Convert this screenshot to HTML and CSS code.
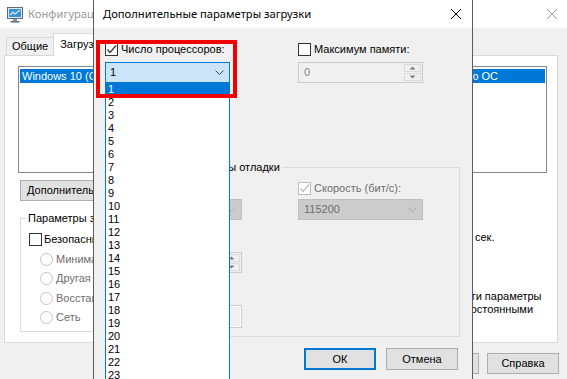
FILE: index.html
```html
<!DOCTYPE html>
<html lang="ru">

<head>
    <meta charset="UTF-8">
    <meta name="viewport" content="width=device-width, initial-scale=1.0">
    <title>Дополнительные параметры загрузки</title>
    <link rel="stylesheet" href="styles.css">
</head>

<body>
    <div class="desktop">

        <!-- окно "Конфигурация системы" (неактивное, позади) -->
        <div class="window back">
            <div class="titlebar">
                <svg class="app-icon" viewBox="0 0 18 18">
                    <rect x="1.5" y="2.5" width="15" height="11" fill="#dfe6ee" stroke="#5d6b7a" />
                    <rect x="3" y="4" width="12" height="8" fill="#3c8fd8" />
                    <path d="M4 10 L7 7 L9 9 L14 5" stroke="#cfe8ff" stroke-width="1.2" fill="none" />
                    <rect x="7" y="14" width="4" height="2" fill="#8a96a3" />
                    <rect x="4.5" y="16" width="9" height="1.5" fill="#5d6b7a" />
                </svg>
                <span class="title">Конфигурация системы</span>
                <svg class="close" viewBox="0 0 10 10">
                    <path d="M0 0 L10 10 M10 0 L0 10" stroke="#9a9a9a" stroke-width="1" />
                </svg>
            </div>

            <div class="tabs">
                <div class="tab">Общие</div>
                <div class="tab active">Загрузка</div>
            </div>

            <div class="tab-page">
                <div class="os-list">
                    <div class="os-item selected">
                        <span>Windows 10 (C:\Windows) : Текущая ОС;</span>
                        <span>Загружаемая по умолчанию ОС</span>
                    </div>
                </div>

                <div class="list-buttons">
                    <div class="btn">Дополнительные параметры...</div>
                </div>

                <div class="boot-area">
                    <div class="group boot-group">
                        <span class="group-title">Параметры загрузки</span>
                        <label class="check-row first">
                            <span class="box"></span>Безопасный режим
                        </label>
                        <label class="radio-row disabled"><span class="dot"></span>Минимальная</label>
                        <label class="radio-row disabled"><span class="dot"></span>Другая оболочка</label>
                        <label class="radio-row disabled"><span class="dot"></span>Восстановление</label>
                        <label class="radio-row disabled"><span class="dot"></span>Сеть</label>
                    </div>

                    <div class="boot-side">
                        <div class="timeout">
                            <span class="input"></span>
                            <span>сек.</span>
                        </div>
                        <label class="check-row persist">
                            <span class="box"></span>
                            <span class="persist-text">Сделать эти параметры загрузки постоянными</span>
                        </label>
                    </div>
                </div>
            </div>

            <div class="footer">
                <div class="btn wide"></div>
                <div class="btn wide"></div>
                <div class="btn wide"></div>
                <div class="btn wide">Справка</div>
            </div>
        </div>

        <!-- диалог "Дополнительные параметры загрузки" -->
        <div class="window front">
            <div class="titlebar">
                <span class="title">Дополнительные параметры загрузки</span>
                <svg class="close" viewBox="0 0 10 10">
                    <path d="M0 0 L10 10 M10 0 L0 10" stroke="#000" stroke-width="1" />
                </svg>
            </div>

            <div class="front-body">
                <div class="two-cols">
                    <label class="check-row">
                        <span class="box">
                            <svg viewBox="0 0 11 11"><path d="M1.5 5.5 L4 8.5 L10 1.5" /></svg>
                        </span>Число процессоров:
                    </label>
                    <label class="check-row">
                        <span class="box"></span>Максимум памяти:
                    </label>

                    <div class="combo open">
                        <span class="combo-val">1</span>
                        <svg class="chevron" viewBox="0 0 9 5"><path d="M0.5 0.5 L4.5 4.5 L8.5 0.5" /></svg>
                    </div>
                    <div class="spin disabled">
                        <span class="spin-val">0</span>
                        <span class="spin-btns">
                            <span class="spin-btn"><svg viewBox="0 0 7 4"><path d="M0.5 3.5 L3.5 0.5 L6.5 3.5z" /></svg></span>
                            <span class="spin-btn"><svg viewBox="0 0 7 4"><path d="M0.5 0.5 L3.5 3.5 L6.5 0.5z" /></svg></span>
                        </span>
                    </div>
                </div>

                <!-- флажки под раскрытым списком -->
                <div class="check-row pci"><span class="box"></span></div>
                <div class="check-row debug"><span class="box"></span></div>

                <div class="group debug-group">
                    <span class="group-title">Глобальные параметры отладки</span>
                    <div class="debug-grid">
                        <div class="check-row disabled"><span class="box"></span></div>
                        <label class="check-row disabled">
                            <span class="box">
                                <svg viewBox="0 0 11 11"><path d="M1.5 5.5 L4 8.5 L10 1.5" /></svg>
                            </span>Скорость (бит/с):
                        </label>

                        <div class="combo disabled">
                            <span class="combo-val"></span>
                            <svg class="chevron" viewBox="0 0 9 5"><path d="M0.5 0.5 L4.5 4.5 L8.5 0.5" /></svg>
                        </div>
                        <div class="combo disabled">
                            <span class="combo-val">115200</span>
                            <svg class="chevron" viewBox="0 0 9 5"><path d="M0.5 0.5 L4.5 4.5 L8.5 0.5" /></svg>
                        </div>

                        <div class="check-row disabled gap-row"><span class="box"></span></div>
                        <div></div>
                        <div class="spin disabled">
                            <span class="spin-val"></span>
                            <span class="spin-btns">
                                <span class="spin-btn"><svg viewBox="0 0 7 4"><path d="M0.5 3.5 L3.5 0.5 L6.5 3.5z" /></svg></span>
                                <span class="spin-btn"><svg viewBox="0 0 7 4"><path d="M0.5 0.5 L3.5 3.5 L6.5 0.5z" /></svg></span>
                            </span>
                        </div>
                        <div></div>

                        <div class="check-row disabled gap-row"><span class="box"></span></div>
                        <div></div>
                        <div class="textbox disabled"></div>
                        <div></div>
                    </div>
                </div>

                <div class="footer">
                    <div class="btn wide default">ОК</div>
                    <div class="btn wide">Отмена</div>
                </div>
            </div>

            <!-- раскрытый список процессоров -->
            <div class="dropdown">
                <div class="dd-item selected">1</div>
                <div class="dd-item">2</div>
                <div class="dd-item">3</div>
                <div class="dd-item">4</div>
                <div class="dd-item">5</div>
                <div class="dd-item">6</div>
                <div class="dd-item">7</div>
                <div class="dd-item">8</div>
                <div class="dd-item">9</div>
                <div class="dd-item">10</div>
                <div class="dd-item">11</div>
                <div class="dd-item">12</div>
                <div class="dd-item">13</div>
                <div class="dd-item">14</div>
                <div class="dd-item">15</div>
                <div class="dd-item">16</div>
                <div class="dd-item">17</div>
                <div class="dd-item">18</div>
                <div class="dd-item">19</div>
                <div class="dd-item">20</div>
                <div class="dd-item">21</div>
                <div class="dd-item">22</div>
                <div class="dd-item">23</div>
            </div>

            <!-- красная рамка-выделение -->
            <div class="mark"></div>
        </div>

    </div>
</body>

</html>
```

FILE: styles.css
```css
body {
    margin: 0;
    background: #f0f0f0;
    font-family: "Liberation Sans", Arial, sans-serif;
    font-size: 11px;
    line-height: 13px;
    color: #000;
}

.desktop {
    position: relative;
    width: 567px;
    height: 379px;
    overflow: hidden;
}

label {
    cursor: default;
}

/* окна */

.window {
    position: absolute;
    top: 0;
    height: 400px;
    box-sizing: border-box;
    background: #f0f0f0;
}

.window.back {
    left: 0;
    width: 575px;
}

.window.front {
    left: 93px;
    width: 380px;
    border-left: 1px solid #5c5c5c;
    border-right: 1px solid #5c5c5c;
}

.titlebar {
    height: 28px;
    background: #fff;
    display: flex;
    align-items: center;
    font-family: "Noto Sans", "Open Sans", sans-serif;
    font-size: 11.2px;
    line-height: 16px;
}

.back .titlebar {
    padding-left: 6px;
    color: #999;
}

.front .titlebar {
    padding-left: 9px;
}

.app-icon {
    width: 18px;
    height: 18px;
    margin-right: 4px;
}

.close {
    width: 10px;
    height: 10px;
    margin-left: auto;
}

.back .close {
    margin-right: 18px;
}

.front .close {
    margin-right: 11px;
}

/* вкладки */

.tabs {
    display: flex;
    align-items: flex-end;
    height: 27px;
    padding-left: 6px;
    box-sizing: border-box;
}

.tab {
    height: 18px;
    padding: 0 5px;
    border: 1px solid #d9d9d9;
    border-bottom: none;
    box-sizing: border-box;
    line-height: 17px;
}

.tab + .tab {
    margin-left: -1px;
}

.tab.active {
    height: 23px;
    margin-bottom: -1px;
    padding: 0 6px;
    background: #fff;
    line-height: 21px;
    position: relative;
}

.tab-page {
    margin-left: 4px;
    width: 554px;
    height: 288px;
    padding: 10px 0 0 13px;
    box-sizing: border-box;
    background: #fff;
    border: 1px solid #d9d9d9;
}

.os-list {
    width: 529px;
    height: 107px;
    padding: 2px 1px;
    box-sizing: border-box;
    border: 1px solid #828790;
}

.os-item {
    display: flex;
    justify-content: space-between;
    height: 14px;
    line-height: 14px;
    padding: 0 47px 0 2px;
    white-space: nowrap;
}

.os-item.selected {
    background: #0078d7;
    color: #fff;
}

.list-buttons {
    display: flex;
    margin: 7px 0 0 2px;
}

/* кнопки */

.btn {
    height: 21px;
    padding: 0 6px;
    box-sizing: border-box;
    display: flex;
    align-items: center;
    justify-content: center;
    background: #e1e1e1;
    border: 1px solid #adadad;
    white-space: nowrap;
}

.btn.wide {
    width: 72px;
    padding: 0;
}

.btn.default {
    border: 2px solid #0078d7;
}

/* группы */

.group {
    border: 1px solid #dcdcdc;
    box-sizing: border-box;
}

.group-title {
    display: block;
    width: fit-content;
    margin: -8px 0 0 5px;
    padding: 0 2px;
    line-height: 15px;
    background: #f0f0f0;
}

.boot-area {
    display: flex;
    align-items: flex-start;
    margin: 17px 0 0 2px;
}

.boot-group {
    width: 340px;
    padding: 0 0 7px 8px;
}

.boot-group .group-title {
    margin-left: -3px;
    background: #fff;
}

/* флажки и переключатели */

.check-row {
    display: flex;
    align-items: center;
    gap: 3px;
    height: 14px;
    line-height: 14px;
    white-space: nowrap;
}

.box {
    width: 13px;
    height: 13px;
    flex: none;
    box-sizing: border-box;
    border: 1px solid #333;
    background: #fff;
    display: flex;
}

.box svg {
    width: 11px;
    height: 11px;
    fill: none;
    stroke: #333;
    stroke-width: 1.2;
}

.disabled {
    color: #6d6d6d;
}

.disabled .box {
    border-color: #bcbcbc;
}

.disabled .box svg {
    stroke: #bcbcbc;
}

.boot-group .first {
    margin-top: 6px;
    gap: 2px;
}

.radio-row {
    display: flex;
    align-items: center;
    gap: 3px;
    height: 14px;
    line-height: 14px;
    margin: 6px 0 0 11px;
    white-space: nowrap;
}

.radio-row:nth-of-type(odd) {
    margin-top: 5px;
}

.dot {
    width: 13px;
    height: 13px;
    box-sizing: border-box;
    border: 1px solid #c4c4c4;
    border-radius: 50%;
    background: #fff;
}

.boot-side {
    margin-left: 43px;
    padding-top: 9px;
}

.timeout {
    display: flex;
    align-items: center;
    gap: 4px;
    height: 21px;
    padding-left: 32px;
}

.timeout .input {
    width: 36px;
    height: 21px;
    box-sizing: border-box;
    border: 1px solid #7a7a7a;
}

.persist {
    align-items: flex-start;
    height: auto;
    margin-top: 42px;
    line-height: 13px;
}

.persist-text {
    width: 130px;
    white-space: normal;
}

.footer {
    display: flex;
    justify-content: flex-end;
    gap: 8px;
    padding-right: 16px;
    margin-top: 10px;
}

/* поля ввода */

.combo {
    height: 21px;
    box-sizing: border-box;
    display: flex;
    align-items: center;
    justify-content: space-between;
    padding: 0 5px 0 4px;
}

.combo.open {
    background: #cce4f7;
    border: 1px solid #0078d7;
}

.combo.disabled {
    background: #cccccc;
    border: 1px solid #bfbfbf;
    padding-left: 5px;
}

.chevron {
    width: 9px;
    height: 5px;
    fill: none;
    stroke: #444;
}

.disabled .chevron {
    stroke: #a8a8a8;
}

.spin {
    height: 21px;
    box-sizing: border-box;
    display: flex;
    border: 1px solid #cccccc;
    background: #f0f0f0;
}

.spin-val {
    flex: 1;
    padding-left: 5px;
    line-height: 19px;
    color: #838383;
}

.spin-btns {
    width: 17px;
    display: flex;
    flex-direction: column;
    padding: 1px 1px 1px 0;
    gap: 1px;
}

.spin-btn {
    flex: 1;
    display: flex;
    align-items: center;
    justify-content: center;
    border: 1px solid #dadada;
}

.spin-btn svg {
    width: 7px;
    height: 4px;
    fill: #7a7a7a;
}

.textbox {
    height: 23px;
    box-sizing: border-box;
    border: 1px solid #cccccc;
    box-shadow: inset 0 0 0 1px #fff;
    background: #f0f0f0;
}

/* диалог */

.front-body {
    padding: 14px 0 0 11px;
}

.two-cols {
    display: grid;
    grid-template-columns: 125px 125px;
    column-gap: 68px;
    row-gap: 6px;
}

.pci {
    margin-top: 14px;
}

.debug {
    margin-top: 8px;
}

.debug-group {
    width: 355px;
    margin-top: 34px;
    padding: 0 0 8px 11px;
}

.debug-group .group-title {
    margin-left: -5px;
}

.debug-grid {
    display: grid;
    grid-template-columns: 125px 125px;
    column-gap: 56px;
    row-gap: 4px;
    margin-top: 6px;
}

.gap-row {
    margin-top: 10px;
}

.front .footer {
    padding-right: 14px;
    margin-top: 11px;
    gap: 10px;
}

.front .footer .btn {
    height: 22px;
}

/* раскрытый список */

.dropdown {
    position: absolute;
    left: 11px;
    top: 83px;
    width: 125px;
    box-sizing: border-box;
    border: 1px solid #0078d7;
    border-top: none;
    background: #fff;
}

.dd-item {
    height: 13px;
    line-height: 13px;
    padding-left: 2px;
}

.dd-item.selected {
    background: #0078d7;
    color: #fff;
}

.mark {
    position: absolute;
    left: 2px;
    top: 40px;
    width: 141px;
    height: 58px;
    box-sizing: border-box;
    border: 4px solid #f00000;
}
```
